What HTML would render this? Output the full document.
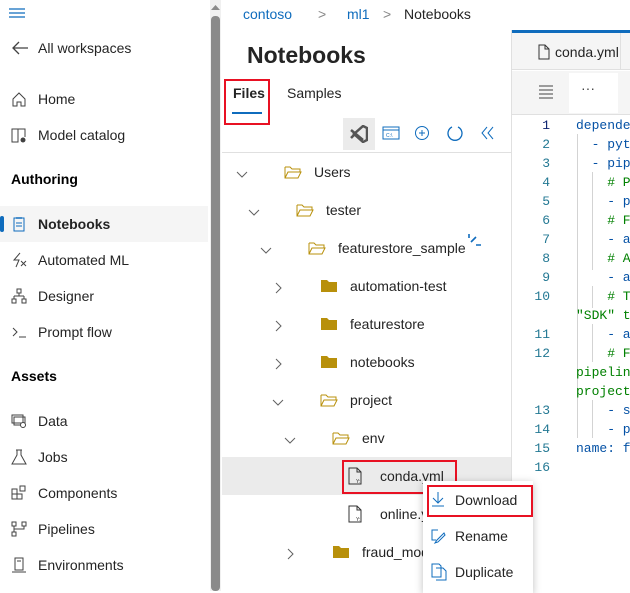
<!DOCTYPE html>
<html><head><meta charset="utf-8"><style>
*{margin:0;padding:0;box-sizing:border-box}
body{width:630px;height:591px;overflow:hidden;background:#fff;font-family:"Liberation Sans",sans-serif;color:#242424;position:relative;font-size:14px}
.a{position:absolute;white-space:nowrap}
.nav{font-size:14px}
.ic{position:absolute;left:11px;width:16px;height:16px}
.code{font-family:"Liberation Mono",monospace;font-size:13px}
.ln{position:absolute;width:30px;text-align:right;left:520px;color:#237893;font-family:"Liberation Mono",monospace;font-size:13px}
.cl{position:absolute;left:576px;font-family:"Liberation Mono",monospace;font-size:13px;white-space:pre}
.guide{position:absolute;width:1px;background:#d3d3d3}
.row{position:absolute;left:222px;width:289px;height:38px}
.chev{position:absolute;width:16px;height:16px}
.fold{position:absolute;width:18px;height:14px}
.red{position:absolute;border:2px solid #e81123}
</style></head><body>
<!-- left nav -->
<svg class="a" style="left:8px;top:8px" width="18" height="10"><path d="M1 1h16M1 5h16M1 9h16" stroke="#0f6cbd" stroke-width="1.2"/></svg>
<svg class="a" style="left:11px;top:40px" width="18" height="16"><path d="M17 8H2M8 2L2 8l6 6" stroke="#424242" fill="none" stroke-width="1.3"/></svg>
<div class="a nav" style="left:38px;top:40px">All workspaces</div>
<svg class="ic" style="top:91px"><path d="M2 8L8 2l6 6v7H10v-4H6v4H2z" stroke="#424242" fill="none"/></svg>
<div class="a nav" style="left:38px;top:91px">Home</div>
<svg class="ic" style="top:127px"><path d="M1 2h6v13H1zM7 2h7v8" stroke="#424242" fill="none"/><circle cx="12" cy="13" r="2.5" fill="#424242"/></svg>
<div class="a nav" style="left:38px;top:127px">Model catalog</div>
<div class="a" style="left:11px;top:171px;font-weight:bold;font-size:14px;color:#000">Authoring</div>
<div class="a" style="left:0;top:206px;width:208px;height:36px;background:#f5f5f5"></div>
<div class="a" style="left:0;top:216px;width:4px;height:16px;background:#0f6cbd;border-radius:2px"></div>
<svg class="ic" style="top:216px"><path d="M3 2h10v13H3zM6 1v2M8 1v2M10 1v2M5 7h6M5 10h6" stroke="#0f6cbd" fill="none"/></svg>
<div class="a nav" style="left:38px;top:216px;font-weight:bold">Notebooks</div>
<svg class="ic" style="top:252px"><path d="M9 1L3 8h5l-3 7M10 9l5 5M10 14l5-5" stroke="#424242" fill="none"/></svg>
<div class="a nav" style="left:38px;top:252px">Automated ML</div>
<svg class="ic" style="top:288px"><path d="M6 1h4v4H6zM8 5v3M3 8h10M3 8v3M13 8v3M1 11h4v4H1zM11 11h4v4h-4z" stroke="#424242" fill="none"/></svg>
<div class="a nav" style="left:38px;top:288px">Designer</div>
<svg class="ic" style="top:324px"><path d="M2 4l4 4-4 4M8 13h7" stroke="#424242" fill="none"/></svg>
<div class="a nav" style="left:38px;top:324px">Prompt flow</div>
<div class="a" style="left:11px;top:368px;font-weight:bold;font-size:14px;color:#000">Assets</div>
<svg class="ic" style="top:413px"><path d="M1 2h11v8H1zM3 4h11v8H3z" stroke="#424242" fill="none"/><circle cx="12" cy="12" r="2.5" stroke="#424242" fill="#fff"/></svg>
<div class="a nav" style="left:38px;top:413px">Data</div>
<svg class="ic" style="top:449px"><path d="M5 1h6M6 1v5l-5 9h14l-5-9V1" stroke="#424242" fill="none"/></svg>
<div class="a nav" style="left:38px;top:449px">Jobs</div>
<svg class="ic" style="top:485px"><path d="M1 4h5v5H1zM1 9h5v5H1zM6 9h5v5H6zM9 1h5v5H9z" stroke="#424242" fill="none"/></svg>
<div class="a nav" style="left:38px;top:485px">Components</div>
<svg class="ic" style="top:521px"><path d="M1 1h4v4H1zM11 1h4v4h-4zM1 11h4v4H1zM3 5v6M13 5v3H3" stroke="#424242" fill="none"/></svg>
<div class="a nav" style="left:38px;top:521px">Pipelines</div>
<svg class="ic" style="top:557px"><path d="M4 1h8v12H4zM1 15h14M6 4h4" stroke="#424242" fill="none"/></svg>
<div class="a nav" style="left:38px;top:557px">Environments</div>
<!-- scrollbar -->
<div class="a" style="left:210px;top:0;width:11px;height:591px;background:#f0f0f0"></div>
<div class="a" style="left:211px;top:16px;width:9px;height:575px;background:#8a8a8a;border-radius:4px"></div>
<svg class="a" style="left:210px;top:3px" width="11" height="8"><path d="M1 7L5.5 2 10 7z" fill="#8a8a8a"/></svg>
<!-- middle -->
<div class="a" style="left:243px;top:6px;color:#0f6cbd">contoso</div>
<div class="a" style="left:318px;top:6px;color:#888">&gt;</div>
<div class="a" style="left:347px;top:6px;color:#0f6cbd">ml1</div>
<div class="a" style="left:383px;top:6px;color:#888">&gt;</div>
<div class="a" style="left:404px;top:6px">Notebooks</div>
<div class="a" style="left:247px;top:42px;font-size:23px;font-weight:bold">Notebooks</div>
<div class="a" style="left:233px;top:85px;font-weight:bold">Files</div>
<div class="a" style="left:232px;top:112px;width:30px;height:2px;background:#0f6cbd"></div>
<div class="a" style="left:287px;top:85px">Samples</div>
<div class="red" style="left:224px;top:79px;width:46px;height:46px"></div>
<div class="a" style="left:343px;top:118px;width:32px;height:32px;background:#ebebeb"></div>
<svg class="a" style="left:350px;top:125px" width="18" height="18"><path d="M13 1l4 2v12l-4 2-9-8zM1 5l12 10M1 13l4-4" stroke="#555" stroke-width="2.5" fill="none"/></svg>
<svg class="a" style="left:382px;top:126px" width="18" height="14"><rect x="1" y="1" width="16" height="12" fill="none" stroke="#0f6cbd"/><path d="M1 4h16" stroke="#0f6cbd"/><text x="4" y="11" font-size="5" fill="#0f6cbd" font-family="Liberation Sans">C:\</text></svg>
<svg class="a" style="left:414px;top:125px" width="16" height="16"><circle cx="8" cy="8" r="6.5" stroke="#0f6cbd" fill="none"/><path d="M8 5v6M5 8h6" stroke="#0f6cbd"/></svg>
<svg class="a" style="left:446px;top:124px" width="18" height="18"><path d="M6 3A7 7 0 1 0 12 3" stroke="#0f6cbd" fill="none" stroke-width="1.3"/></svg>
<svg class="a" style="left:480px;top:126px" width="16" height="14"><path d="M7 1L2 7l5 6M13 1L8 7l5 6" stroke="#0f6cbd" fill="none"/></svg>
<div class="a" style="left:222px;top:152px;width:289px;height:1px;background:#e0e0e0"></div>
<div class="a" style="left:511px;top:30px;width:1px;height:561px;background:#e0e0e0"></div>
<!-- tree -->
<div class="row" style="top:457px;background:#ebebeb"></div>
<svg width="0" height="0" style="position:absolute"><defs>
<symbol id="down" viewBox="0 0 16 16"><path d="M3 6l5 5 5-5" stroke="#616161" fill="none"/></symbol>
<symbol id="right" viewBox="0 0 16 16"><path d="M6 3l5 5-5 5" stroke="#616161" fill="none"/></symbol>
<symbol id="open" viewBox="0 0 18 14"><path d="M1 2h5l2 2h8v3M1 2v11h13l3-6H4l-3 6" stroke="#b8900b" fill="none"/></symbol>
<symbol id="closed" viewBox="0 0 18 14"><path d="M1 1h6l2 2h8v10H1z" fill="#b8900b"/></symbol>
<symbol id="file" viewBox="0 0 14 18"><path d="M1 1h8l4 4v12H1zM9 1v4h4" stroke="#333" fill="none"/><text x="8" y="16" font-size="5" fill="#333">Y:</text></symbol>
</defs></svg>
<svg class="chev" style="left:234px;top:166px"><use href="#down"/></svg><svg class="fold" style="left:284px;top:165px"><use href="#open"/></svg><div class="a" style="left:314px;top:164px">Users</div>
<svg class="chev" style="left:246px;top:204px"><use href="#down"/></svg><svg class="fold" style="left:296px;top:203px"><use href="#open"/></svg><div class="a" style="left:326px;top:202px">tester</div>
<svg class="chev" style="left:258px;top:242px"><use href="#down"/></svg><svg class="fold" style="left:308px;top:241px"><use href="#open"/></svg><div class="a" style="left:338px;top:240px">featurestore_sample</div>
<svg class="a" style="left:467px;top:233px" width="14" height="14"><path d="M2 1v4M4 9l5-5M9 12h5" stroke="#0f6cbd" stroke-width="1.6"/></svg>
<svg class="chev" style="left:270px;top:280px"><use href="#right"/></svg><svg class="fold" style="left:320px;top:279px"><use href="#closed"/></svg><div class="a" style="left:350px;top:278px">automation-test</div>
<svg class="chev" style="left:270px;top:318px"><use href="#right"/></svg><svg class="fold" style="left:320px;top:317px"><use href="#closed"/></svg><div class="a" style="left:350px;top:316px">featurestore</div>
<svg class="chev" style="left:270px;top:356px"><use href="#right"/></svg><svg class="fold" style="left:320px;top:355px"><use href="#closed"/></svg><div class="a" style="left:350px;top:354px">notebooks</div>
<svg class="chev" style="left:270px;top:394px"><use href="#down"/></svg><svg class="fold" style="left:320px;top:393px"><use href="#open"/></svg><div class="a" style="left:350px;top:392px">project</div>
<svg class="chev" style="left:282px;top:432px"><use href="#down"/></svg><svg class="fold" style="left:332px;top:431px"><use href="#open"/></svg><div class="a" style="left:362px;top:430px">env</div>
<svg class="a" style="left:348px;top:467px" width="14" height="18"><use href="#file"/></svg><div class="a" style="left:380px;top:468px">conda.yml</div>
<svg class="a" style="left:348px;top:505px" width="14" height="18"><use href="#file"/></svg><div class="a" style="left:380px;top:506px">online.y</div>
<svg class="chev" style="left:282px;top:546px"><use href="#right"/></svg><svg class="fold" style="left:332px;top:545px"><use href="#closed"/></svg><div class="a" style="left:362px;top:544px">fraud_mod</div>
<div class="red" style="left:342px;top:460px;width:115px;height:34px"></div>
<!-- editor -->
<div class="a" style="left:512px;top:30px;width:118px;height:40px;background:#f5f5f5;border-bottom:1px solid #e0e0e0"></div>
<div class="a" style="left:512px;top:30px;width:118px;height:3px;background:#0f6cbd"></div>
<div class="a" style="left:620px;top:33px;width:1px;height:37px;background:#e0e0e0"></div>
<svg class="a" style="left:538px;top:44px" width="12" height="16"><path d="M1 1h6l4 4v10H1zM7 1v4h4" stroke="#333" fill="none"/></svg>
<div class="a" style="left:555px;top:44px;font-size:14px">conda.yml</div>
<div class="a" style="left:512px;top:71px;width:118px;height:44px;background:#f5f5f5;border-bottom:1px solid #e0e0e0"></div>
<div class="a" style="left:569px;top:73px;width:49px;height:40px;background:#fff"></div>
<svg class="a" style="left:538px;top:85px" width="16" height="14"><path d="M1 1h14M1 5h14M1 9h14M1 13h14" stroke="#424242"/></svg>
<div class="a" style="left:581px;top:80px;color:#424242">···</div>
<div class="ln" style="top:118px;color:#0b216f">1</div>
<div class="ln" style="top:137px">2</div><div class="ln" style="top:156px">3</div><div class="ln" style="top:175px">4</div><div class="ln" style="top:194px">5</div><div class="ln" style="top:213px">6</div><div class="ln" style="top:232px">7</div><div class="ln" style="top:251px">8</div><div class="ln" style="top:270px">9</div><div class="ln" style="top:289px">10</div><div class="ln" style="top:327px">11</div><div class="ln" style="top:346px">12</div><div class="ln" style="top:403px">13</div><div class="ln" style="top:422px">14</div><div class="ln" style="top:441px">15</div><div class="ln" style="top:460px">16</div>
<div class="guide" style="left:577px;top:134px;height:281px"></div>
<div class="guide" style="left:592px;top:172px;height:98px"></div>
<div class="guide" style="left:592px;top:286px;height:22px"></div>
<div class="guide" style="left:592px;top:324px;height:38px"></div>
<div class="guide" style="left:577px;top:400px;height:38px"></div>
<div class="guide" style="left:592px;top:400px;height:38px"></div>
<div class="cl" style="top:118px;color:#0451a5">depende</div>
<div class="cl" style="top:137px;color:#0451a5">  - pyt</div>
<div class="cl" style="top:156px;color:#0451a5">  - pip</div>
<div class="cl" style="top:175px;color:#008000">    # P</div>
<div class="cl" style="top:194px;color:#0451a5">    - p</div>
<div class="cl" style="top:213px;color:#008000">    # F</div>
<div class="cl" style="top:232px;color:#0451a5">    - a</div>
<div class="cl" style="top:251px;color:#008000">    # A</div>
<div class="cl" style="top:270px;color:#0451a5">    - a</div>
<div class="cl" style="top:289px;color:#008000">    # T</div>
<div class="cl" style="top:308px;color:#008000">"SDK" t</div>
<div class="cl" style="top:327px;color:#0451a5">    - a</div>
<div class="cl" style="top:346px;color:#008000">    # F</div>
<div class="cl" style="top:365px;color:#008000">pipelin</div>
<div class="cl" style="top:384px;color:#008000">project</div>
<div class="cl" style="top:403px;color:#0451a5">    - s</div>
<div class="cl" style="top:422px;color:#0451a5">    - p</div>
<div class="cl" style="top:441px;color:#0451a5">name: f</div>
<!-- context menu -->
<div class="a" style="left:423px;top:481px;width:110px;height:112px;background:#fff;box-shadow:0 2px 8px rgba(0,0,0,.25)"></div>
<svg class="a" style="left:431px;top:491px" width="14" height="16"><path d="M7 1v11M2 7l5 5 5-5M1 15h12" stroke="#0f6cbd" fill="none"/></svg>
<div class="a" style="left:455px;top:492px">Download</div>
<div class="red" style="left:427px;top:485px;width:106px;height:32px"></div>
<svg class="a" style="left:431px;top:528px" width="16" height="16"><path d="M7 2H1v10h4M13 5L6 12l-2 3 3-1 7-7z" stroke="#0f6cbd" fill="none"/></svg>
<div class="a" style="left:455px;top:528px">Rename</div>
<svg class="a" style="left:431px;top:563px" width="16" height="18"><path d="M1 1h7l2 2v11H1zM5 5h7l3 3v9H5" stroke="#0f6cbd" fill="none"/></svg>
<div class="a" style="left:455px;top:564px">Duplicate</div>
</body></html>
